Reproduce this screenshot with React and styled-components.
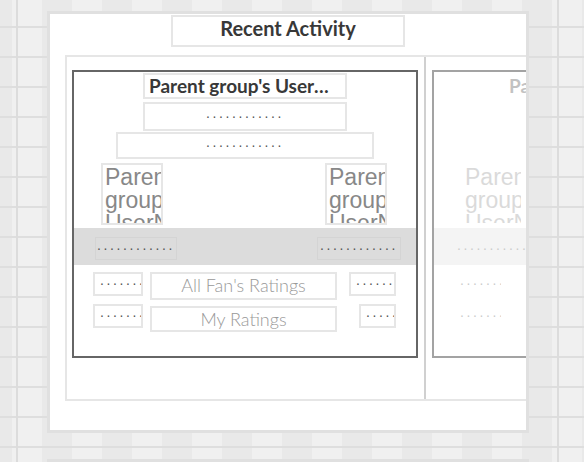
import React from 'react'
import styled, { createGlobalStyle, css } from 'styled-components'

const GlobalStyle = createGlobalStyle`
html, body {
  margin: 0;
  padding: 0;
}
body {
  height: 462px;
  overflow: hidden;
  font-family: Lato, 'Open Sans', sans-serif;
  background-color: #e9e9e9;
  background-image:
    linear-gradient(90deg, transparent 16px, #dcdcdc 16px, #dcdcdc 18px, transparent 18px),
    linear-gradient(90deg, transparent 557px, #dcdcdc 557px, #dcdcdc 559px, transparent 559px),
    repeating-linear-gradient(180deg, transparent 0 26px, #dedede 26px 28px, transparent 28px 30px),
    repeating-linear-gradient(90deg, #e9e9e9 0 12px, #f0f0f0 12px 42px, #e9e9e9 42px 60px);
}
`

const activity = [
    { id: 1, title: "Parent group's UserName", faded: false },
    { id: 2, title: "Parent group's UserName", faded: true },
]

const Activity = ({ item }) => {
    return (
        <Item>
            <Card $faded={item.faded}>
                <CardTitle>{item.title}</CardTitle>
                <DotBox $width={204} $height={29} $top={3}>............</DotBox>
                <DotBox $width={258} $height={27} $top={1}>............</DotBox>
                <ThumbRow>
                    <Thumb>{item.title}</Thumb>
                    <Thumb>{item.title}</Thumb>
                </ThumbRow>
                <Band>
                    <BandBox $width={82}>............</BandBox>
                    <BandBox $width={84}>............</BandBox>
                </Band>
                <RatingRow $top={7}>
                    <SmallBox $width={50}>.......</SmallBox>
                    <Label $height={28} $top={0}>All Fan's Ratings</Label>
                    <SmallBox $width={47}>.......</SmallBox>
                </RatingRow>
                <RatingRow $top={4}>
                    <SmallBox $width={50}>.......</SmallBox>
                    <Label $height={26} $top={2}>My Ratings</Label>
                    <SmallBox $width={37}>.......</SmallBox>
                </RatingRow>
            </Card>
        </Item>
    )
}

export default function App() {
    return (
        <Page>
            <GlobalStyle />
            <Panel>
                <PanelTitle>Recent Activity</PanelTitle>
                <List>
                    {activity.map((item) => <Activity key={item.id} item={item} />)}
                </List>
            </Panel>
            <NextPanel />
        </Page>
    )
}

const Page = styled.div`
padding: 11px 0 0 47px;
`

const Panel = styled.section`
width: 476px;
height: 416px;
border: 3px solid #e0e0e0;
background-color: #fff;
overflow: hidden;
display: flex;
flex-direction: column;
align-items: center;
`

const NextPanel = styled(Panel)`
margin-top: 26px;
height: 100px;
`

const PanelTitle = styled.h2`
box-sizing: border-box;
margin: 1px 0 0 0;
width: 234px;
height: 32px;
border: 2px solid #e6e6e6;
font-size: 20px;
font-weight: 700;
color: #383838;
text-align: center;
line-height: 22px;
`

const List = styled.div`
box-sizing: border-box;
align-self: flex-start;
flex-shrink: 0;
margin: 8px 0 0 15px;
width: 800px;
height: 346px;
border: 2px solid #e6e6e6;
display: flex;
`

const Item = styled.div`
padding: 13px 6px 0 5px;
border-right: 2px solid #d0d0d0;
& + & {
    padding-left: 6px;
}
`

const Card = styled.div`
box-sizing: border-box;
width: 346px;
height: 288px;
border: 2px solid #666;
display: flex;
flex-direction: column;
align-items: center;
${(p) => p.$faded && css`
    border-color: #a3a3a3;
    && > * {
        opacity: 0.3;
    }
    && * {
        border-color: transparent;
    }
`}
`

const CardTitle = styled.div`
box-sizing: border-box;
margin-top: 1px;
width: 204px;
height: 26px;
padding: 0 4px;
border: 2px solid #e6e6e6;
font-size: 19px;
font-weight: 700;
color: #383838;
line-height: 22px;
text-align: center;
white-space: nowrap;
overflow: hidden;
text-overflow: ellipsis;
`

const Dots = styled.div`
box-sizing: border-box;
font-family: 'Liberation Sans', Arial, sans-serif;
font-size: 14px;
letter-spacing: 2.6px;
color: #555;
white-space: nowrap;
overflow: hidden;
`

const DotBox = styled(Dots)`
margin-top: ${(p) => p.$top}px;
width: ${(p) => p.$width}px;
height: ${(p) => p.$height}px;
border: 2px solid #e6e6e6;
text-align: center;
line-height: ${(p) => p.$height - 10}px;
`

const ThumbRow = styled.div`
align-self: stretch;
display: flex;
justify-content: space-between;
margin-top: 4px;
padding: 0 29px 0 27px;
`

const Thumb = styled.div`
box-sizing: border-box;
width: 62px;
height: 62px;
padding: 1px 0 0 2px;
border: 2px solid #e6e6e6;
overflow: hidden;
font-family: 'Liberation Sans', Arial, sans-serif;
font-size: 23px;
line-height: 23px;
color: #888;
`

const Band = styled.div`
align-self: stretch;
margin-top: 3px;
height: 37px;
padding: 0 15px 0 21px;
background-color: #dcdcdc;
display: flex;
justify-content: space-between;
`

const BandBox = styled(Dots)`
margin-top: 9px;
width: ${(p) => p.$width}px;
height: 23px;
border: 1px solid #d4d4d4;
text-align: center;
line-height: 14px;
`

const RatingRow = styled.div`
align-self: stretch;
display: flex;
align-items: flex-start;
margin-top: ${(p) => p.$top}px;
padding: 0 20px 0 19px;
`

const SmallBox = styled(Dots)`
width: ${(p) => p.$width}px;
height: 24px;
padding-left: 5px;
border: 2px solid #e6e6e6;
line-height: 13px;
&:last-child {
    margin-left: auto;
}
`

const Label = styled.div`
box-sizing: border-box;
margin: ${(p) => p.$top}px 0 0 7px;
width: 187px;
height: ${(p) => p.$height}px;
border: 2px solid #e6e6e6;
font-size: 18px;
font-weight: 300;
color: #999;
text-align: center;
line-height: 22px;
`
